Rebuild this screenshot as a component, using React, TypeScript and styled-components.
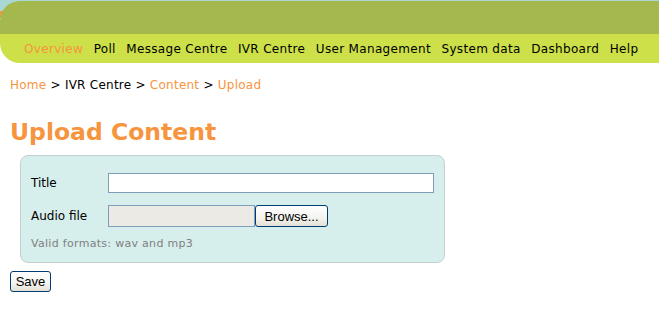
import React from 'react';
import styled, { createGlobalStyle } from 'styled-components';

const GlobalStyle = createGlobalStyle`
    body {
        margin: 0;
        background: #ffffff;
        font-family: "DejaVu Sans", Verdana, sans-serif;
        font-size: 12px;
        color: #000000;
    }
`;

const HeaderWrap = styled.div`
    padding-top: 1px;
    background: linear-gradient(to bottom, #a9d8d3 0px, #a9d8d3 11px, #f7943e 11px, #f7943e 18px, #ffffff 18px);
`;

const Header = styled.div`
    border-radius: 20px 0 0 20px;
    overflow: hidden;
`;

const TopBar = styled.div`
    height: 33px;
    background: #a4b84d;
`;

const Nav = styled.ul`
    display: flex;
    gap: 10.5px;
    margin: 0;
    padding: 1px 0 0 24px;
    height: 29px;
    box-sizing: border-box;
    align-items: center;
    list-style: none;
    background: #cde049;
    letter-spacing: 0.33px;
`;

const NavItem = styled.li<{ active?: boolean }>`
    color: ${(p) => (p.active ? '#f7943e' : '#000000')};
    white-space: nowrap;
`;

const Main = styled.div`
    padding: 0 10px;
`;

const Breadcrumb = styled.div`
    margin-top: 15px;
    color: #000000;
    letter-spacing: 0.25px;
`;

const Crumb = styled.span<{ link?: boolean }>`
    color: ${(p) => (p.link ? '#f7943e' : '#000000')};
`;

const Title = styled.h1`
    margin: 26px 0 0 0;
    font-size: 23.5px;
    line-height: 28px;
    font-weight: bold;
    color: #f7943e;
`;

const FormBox = styled.div`
    margin: 9px 0 0 10px;
    width: 403px;
    padding: 17px 10px 12px 10px;
    background: #d6eeec;
    border: 1px solid #c3d0d0;
    border-radius: 8px;
`;

const Row = styled.div`
    display: flex;
    align-items: center;
    margin-bottom: 12px;
`;

const Label = styled.label`
    width: 77px;
`;

const TextInput = styled.input`
    width: 326px;
    height: 20px;
    box-sizing: border-box;
    border: 1px solid #7f9db9;
    background: #ffffff;
    margin: 0;
    padding: 0 3px;
`;

const FileBox = styled.div`
    width: 147px;
    height: 22px;
    box-sizing: border-box;
    border: 1px solid #7f9db9;
    background: #ebeae4;
`;

const XpButton = styled.button`
    height: 22px;
    box-sizing: border-box;
    border: 1px solid #003c74;
    border-radius: 3px;
    background: linear-gradient(to bottom, #ffffff 0%, #f4f3ee 60%, #e3e1d6 100%);
    font-family: "Liberation Sans", Arial, sans-serif;
    font-size: 13px;
    color: #000000;
    padding: 0 6px;
    margin: 0;
`;

const BrowseButton = styled(XpButton)`
    width: 73px;
    margin-left: 0;
`;

const Hint = styled.div`
    margin-top: -2px;
    font-size: 11px;
    letter-spacing: 0.3px;
    color: #808080;
`;

const SaveButton = styled(XpButton)`
    margin-top: 8px;
    width: 41px;
    height: 21px;
    padding: 0 3px;
`;

const navItems = ['Overview', 'Poll', 'Message Centre', 'IVR Centre', 'User Management', 'System data', 'Dashboard', 'Help'];

const App: React.FC = () => {
    return (
        <>
            <GlobalStyle />
            <HeaderWrap>
                <Header>
                    <TopBar />
                    <Nav>
                        {navItems.map((item, i) => (
                            <NavItem key={item} active={i === 0}>{item}</NavItem>
                        ))}
                    </Nav>
                </Header>
            </HeaderWrap>
            <Main>
                <Breadcrumb>
                    <Crumb link>Home</Crumb> &gt; <Crumb>IVR Centre</Crumb> &gt; <Crumb link>Content</Crumb> &gt; <Crumb link>Upload</Crumb>
                </Breadcrumb>
                <Title>Upload Content</Title>
                <FormBox>
                    <Row>
                        <Label>Title</Label>
                        <TextInput type="text" />
                    </Row>
                    <Row>
                        <Label>Audio file</Label>
                        <FileBox />
                        <BrowseButton>Browse...</BrowseButton>
                    </Row>
                    <Hint>Valid formats: wav and mp3</Hint>
                </FormBox>
                <SaveButton>Save</SaveButton>
            </Main>
        </>
    );
};

export default App;
